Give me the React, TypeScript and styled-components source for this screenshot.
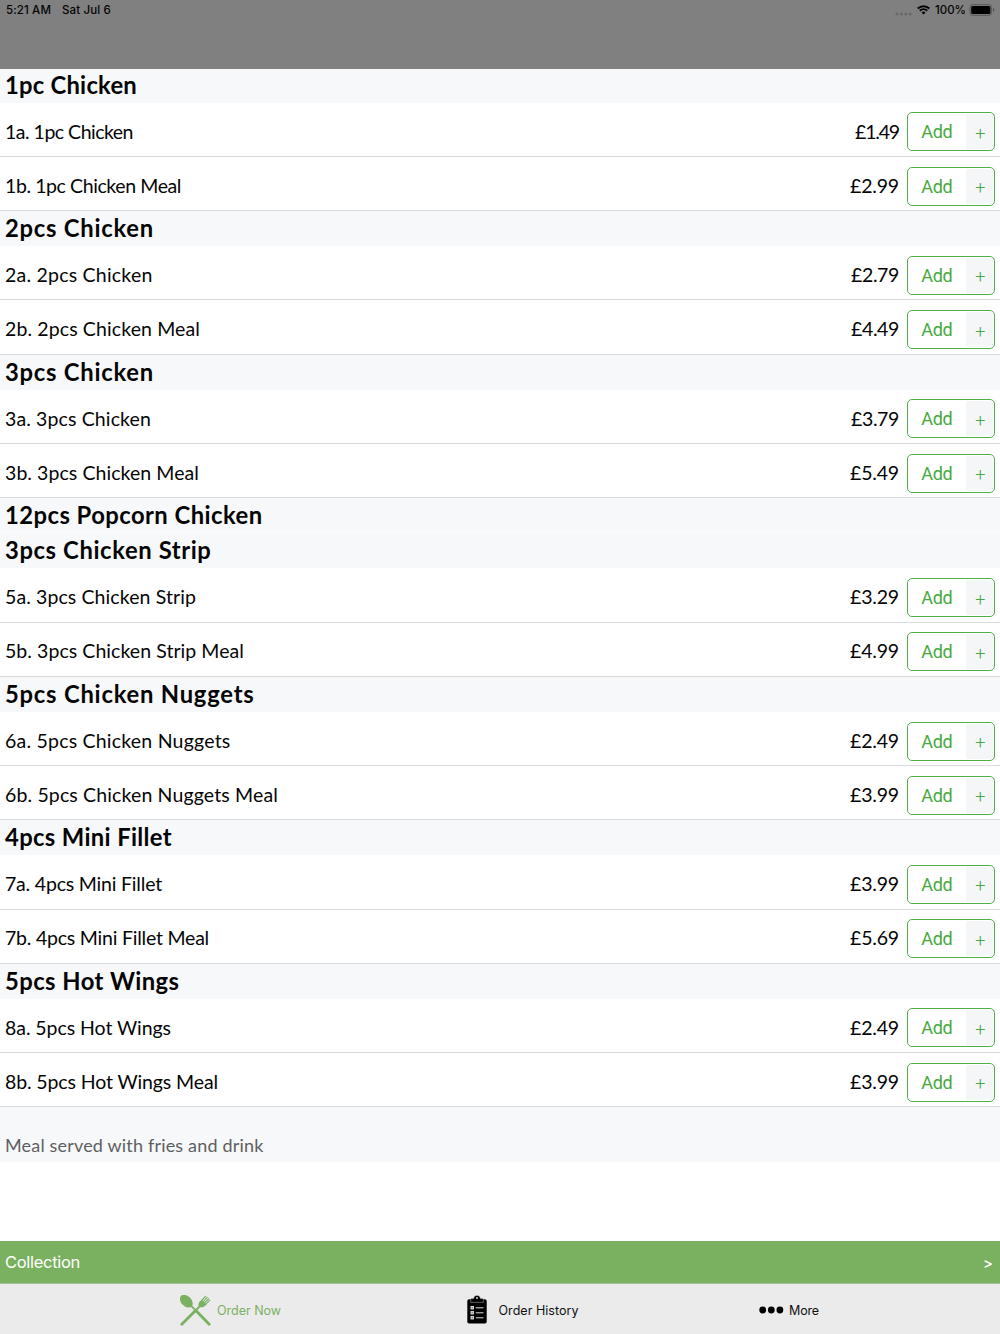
import React, { useLayoutEffect, useRef, useState } from "react";
import styled, { createGlobalStyle } from "styled-components";

const GlobalStyle = createGlobalStyle`
  * { box-sizing: border-box; }
  body { margin: 0; background: #fff; }
`;

const menuFont = `Lato, "Open Sans", sans-serif`;
const systemFont = `Inter, "Liberation Sans", sans-serif`;

const Screen = styled.div`
  width: 1000px;
  height: 1334px;
  display: flex;
  flex-direction: column;
  overflow: hidden;
  color: #050505;
  font-family: ${menuFont};
`;

const TopBar = styled.header`
  flex: 0 0 68.7px;
  background: #808080;
  font-family: ${systemFont};
`;

const StatusBar = styled.div`
  height: 20px;
  padding: 0 5px 0 6px;
  display: flex;
  align-items: center;
  font-size: 11.5px;
  font-weight: 500;
  line-height: 20px;
`;

const StatusDate = styled.span`
  margin-left: 11px;
`;

const StatusIcons = styled.div`
  margin-left: auto;
  display: flex;
  align-items: center;
`;

const Signal = styled.svg`
  margin: 7px 5px 0 0;
`;

const Wifi = styled.svg`
  margin-right: 5px;
`;

const Battery = styled.svg`
  margin-left: 3px;
`;

const MenuList = styled.main`
  flex: 1;
  min-height: 0;
  padding-bottom: 10px;
`;

const SectionTitle = styled.h2<{ $first?: boolean; $divided?: boolean }>`
  margin: 0;
  height: ${(p) => (p.$first ? 34.2 : 35.2)}px;
  padding: ${(p) => (p.$first ? 0 : 0.9)}px 5px 0;
  display: flex;
  align-items: center;
  background: #f7f8fa;
  border-bottom: 1px solid ${(p) => (p.$divided ? "#fcfcfd" : "#f7f8fa")};
  font-size: 23.8px;
  font-weight: 700;
  line-height: 33px;
`;

const ItemRow = styled.div`
  height: 54.15px;
  padding: 4px 5px 0;
  display: flex;
  align-items: center;
  border-bottom: 1px solid #d9dadb;
  font-size: 19.5px;
  line-height: 24px;
`;

const ItemName = styled.div`
  flex: 1;
  padding-top: 0.4px;
`;

const Price = styled.div`
  padding-top: 0.4px;
`;

const AddButton = styled.button`
  width: 88px;
  height: 39px;
  margin: 1px 0 0 8px;
  padding: 1px;
  display: flex;
  border: 1px solid #4fae49;
  border-radius: 5px;
  background: #fff;
  color: #46a93f;
  font-family: Roboto, "Liberation Sans", sans-serif;
  font-size: 18px;
`;

const AddLabel = styled.span`
  flex: 1;
  padding: 0 1px 0 0;
  display: flex;
  align-items: center;
  justify-content: center;
`;

const AddPlus = styled.span`
  width: 27.5px;
  display: flex;
  align-items: center;
  justify-content: center;
  padding: 3px 0 0 2px;
  border-radius: 0 3px 3px 0;
  background: #f5f6f8;
  font-weight: 300;
`;

const Note = styled.p`
  margin: 0;
  height: 54.6px;
  padding: 22px 5px 0;
  background: #f7f8fa;
  color: #5e5f61;
  font-size: 18px;
  line-height: 32px;
`;

const CollectionBar = styled.div`
  flex: 0 0 43px;
  padding: 0 7px 0 5px;
  display: flex;
  align-items: center;
  justify-content: space-between;
  background: #7ab161;
  border-bottom: 1px solid #a5bf97;
  color: #fff;
  font-family: ${systemFont};
  font-size: 16.5px;
`;

const Chevron = styled.span`
  padding-top: 2px;
  font-size: 15px;
  font-weight: 500;
`;

const TabBar = styled.nav`
  flex: 0 0 50px;
  display: grid;
  grid-template-columns: 180px 286.5px 292.5px 1fr;
  align-items: center;
  background: #ebebeb;
  font-family: ${systemFont};
  font-size: 12.5px;
`;

const Tab = styled.div<{ $active?: boolean; $gap: number }>`
  display: flex;
  align-items: center;
  gap: ${(p) => p.$gap}px;
  padding-top: 2px;
  color: ${(p) => (p.$active ? "#7ab161" : "#111")};
`;

const Tracked = styled.span`
  display: inline-block;
  white-space: pre;
`;

/** Text tracked evenly so that it runs to the given measure. */
function Fit({ width, children }: { width: number; children: string }) {
  const ref = useRef<HTMLSpanElement>(null);
  const [spacing, setSpacing] = useState(0);
  useLayoutEffect(() => {
    const natural = ref.current!.getBoundingClientRect().width;
    setSpacing((width - natural) / children.length);
  }, []);
  return (
    <Tracked ref={ref} style={{ letterSpacing: spacing }}>
      {children}
    </Tracked>
  );
}

type Item = { name: string; width: number; price: string; priceWidth: number };
type Section = { title: string; width: number; items: Item[] };

const item = (name: string, width: number, price: string, priceWidth = 49): Item => ({
  name,
  width,
  price,
  priceWidth,
});

const sections: Section[] = [
  { title: "1pc Chicken", width: 132, items: [
    item("1a. 1pc Chicken", 128, "£1.49", 44),
    item("1b. 1pc Chicken Meal", 176, "£2.99"),
  ] },
  { title: "2pcs Chicken", width: 149, items: [
    item("2a. 2pcs Chicken", 147.5, "£2.79", 48),
    item("2b. 2pcs Chicken Meal", 195, "£4.49", 48),
  ] },
  { title: "3pcs Chicken", width: 149, items: [
    item("3a. 3pcs Chicken", 146, "£3.79", 48),
    item("3b. 3pcs Chicken Meal", 194, "£5.49"),
  ] },
  { title: "12pcs Popcorn Chicken", width: 257.5, items: [] },
  { title: "3pcs Chicken Strip", width: 206.5, items: [
    item("5a. 3pcs Chicken Strip", 191, "£3.29"),
    item("5b. 3pcs Chicken Strip Meal", 239, "£4.99"),
  ] },
  { title: "5pcs Chicken Nuggets", width: 249.5, items: [
    item("6a. 5pcs Chicken Nuggets", 225.5, "£2.49"),
    item("6b. 5pcs Chicken Nuggets Meal", 273, "£3.99"),
  ] },
  { title: "4pcs Mini Fillet", width: 167, items: [
    item("7a. 4pcs Mini Fillet", 157, "£3.99"),
    item("7b. 4pcs Mini Fillet Meal", 204, "£5.69"),
  ] },
  { title: "5pcs Hot Wings", width: 174.5, items: [
    item("8a. 5pcs Hot Wings", 166, "£2.49"),
    item("8b. 5pcs Hot Wings Meal", 213, "£3.99"),
  ] },
];

const SignalDots = () => (
  <Signal width="17" height="4" viewBox="0 0 17 4" fill="#686868">
    {[2, 6.4, 10.8, 15.2].map((x) => (
      <circle key={x} cx={x} cy="2" r="1.5" />
    ))}
  </Signal>
);

const WifiIcon = () => (
  <Wifi width="13" height="10" viewBox="0 0 13 10" fill="none" stroke="#000" strokeWidth="1.9">
    <path d="M.7 3.5A8.4 8.4 0 0 1 12.3 3.5" />
    <path d="M2.8 5.8A5.3 5.3 0 0 1 10.2 5.8" />
    <path d="M6.5 9.5 4.5 7.5A3 3 0 0 1 8.5 7.5Z" fill="#000" stroke="none" />
  </Wifi>
);

const BatteryIcon = () => (
  <Battery width="26" height="12" viewBox="0 0 26 12">
    <rect x="1" y=".7" width="21.6" height="10.6" rx="2.8" fill="none" stroke="#555" />
    <rect x="2.2" y="2" width="19.2" height="8" rx="1.6" fill="#000" />
    <path d="M24 4V8Q25.4 7.4 25.4 6T24 4Z" fill="#555" />
  </Battery>
);

const CutleryIcon = () => (
  <svg width="31" height="31" viewBox="0 0 31 31" fill="#7ab161" stroke="#7ab161">
    <ellipse cx="6.3" cy="6.2" rx="7.5" ry="5.1" transform="rotate(45 6.3 6.2)" stroke="none" />
    <path d="M10.5 10.2 16 15.8" strokeWidth="1.8" />
    <path d="M15.8 15.6 29.2 29.2" strokeWidth="2.8" strokeLinecap="round" />
    <path d="M20.5 10.5 15 16" strokeWidth="1.8" />
    <path d="M15.3 15.7 1.8 29.2" strokeWidth="2.8" strokeLinecap="round" />
    <path d="M21.8 4.8 26.6 9.4 24.6 11.3C22.7 12.8 20.5 12.7 19.3 11.6 18 10.4 18 8.4 19.8 6.6Z" stroke="none" />
    <path d="M21.6 5.4 25.9 1M23 6.7 27.5 2.2M24.4 8 28.9 3.5M25.8 9.2 30.2 4.8" strokeWidth="1.1" />
  </svg>
);

const ClipboardIcon = () => (
  <svg width="20" height="30" viewBox="0 0 20 30">
    <rect x=".3" y="4.3" width="19.4" height="24.3" rx="1.8" fill="#000" />
    <path d="M3.7 7.4V4.6Q3.7 3.6 4.8 3.6H6.6Q7 .4 10 .4T13.4 3.6H15.2Q16.3 3.6 16.3 4.6V7.4Z" fill="#000" stroke="#bbb" strokeWidth=".5" />
    <circle cx="10" cy="3" r=".9" fill="#ebebeb" />
    <g fill="#888" stroke="#ebebeb" strokeWidth=".9">
      <rect x="4" y="11.4" width="2.4" height="2.6" />
      <rect x="4" y="16.4" width="2.4" height="2.6" />
      <rect x="4" y="21.4" width="2.4" height="2.6" />
    </g>
    <path d="M8.8 12.8H16.5M8.8 17.8H16.5M8.8 22.8H16.5" stroke="#ddd" strokeWidth="1" />
  </svg>
);

const MoreIcon = () => (
  <svg width="25" height="8" viewBox="0 0 25 8" fill="#000">
    <circle cx="3.7" cy="4" r="3.4" />
    <circle cx="12.3" cy="4" r="3.4" />
    <circle cx="20.9" cy="4" r="3.4" />
  </svg>
);

export default function App() {
  return (
    <Screen>
      <GlobalStyle />
      <TopBar>
        <StatusBar>
          <Fit width={45}>5:21 AM</Fit>
          <StatusDate><Fit width={49}>Sat Jul 6</Fit></StatusDate>
          <StatusIcons>
            <SignalDots />
            <WifiIcon />
            <Fit width={31}>100%</Fit>
            <BatteryIcon />
          </StatusIcons>
        </StatusBar>
      </TopBar>
      <MenuList>
        {sections.map((section, index) => (
          <React.Fragment key={section.title}>
            <SectionTitle $first={index === 0} $divided={section.items.length === 0}>
              <Fit width={section.width}>{section.title}</Fit>
            </SectionTitle>
            {section.items.map((entry) => (
              <ItemRow key={entry.name}>
                <ItemName><Fit width={entry.width}>{entry.name}</Fit></ItemName>
                <Price><Fit width={entry.priceWidth}>{entry.price}</Fit></Price>
                <AddButton>
                  <AddLabel><Fit width={31}>Add</Fit></AddLabel>
                  <AddPlus>+</AddPlus>
                </AddButton>
              </ItemRow>
            ))}
          </React.Fragment>
        ))}
        <Note><Fit width={258.5}>Meal served with fries and drink</Fit></Note>
      </MenuList>
      <CollectionBar>
        <Fit width={75}>Collection</Fit>
        <Chevron>&gt;</Chevron>
      </CollectionBar>
      <TabBar>
        <span />
        <Tab $active $gap={6}>
          <CutleryIcon />
          <Fit width={64}>Order Now</Fit>
        </Tab>
        <Tab $gap={12}>
          <ClipboardIcon />
          <Fit width={80}>Order History</Fit>
        </Tab>
        <Tab $gap={5}>
          <MoreIcon />
          <Fit width={30}>More</Fit>
        </Tab>
      </TabBar>
    </Screen>
  );
}
